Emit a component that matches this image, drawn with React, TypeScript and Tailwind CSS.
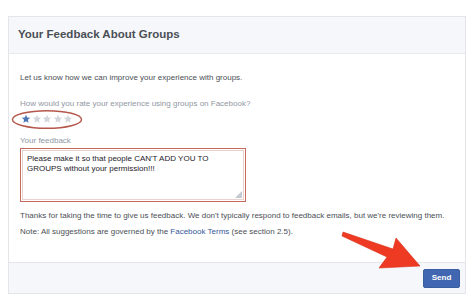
import React from 'react';

const Stars: React.FC<{ rating: number }> = ({ rating }) => (
  <div className="flex items-center gap-[0.5px]">
    {[0, 1, 2, 3, 4].map((i) => (
      <svg key={i} width="10" height="10" viewBox="0 0 24 24">
        <path
          d="M12 2l2.9 6.6 7.1.6-5.4 4.7 1.6 7-6.2-3.7-6.2 3.7 1.6-7L2 9.2l7.1-.6z"
          fill={i < rating ? '#4a76b5' : '#d3d6db'}
        />
      </svg>
    ))}
  </div>
);

const App: React.FC = () => {
  return (
    <div
      className="relative w-[474px] h-[307px] bg-white overflow-hidden text-[#4b4f56]"
      style={{ fontFamily: '"Liberation Sans", Arial, sans-serif' }}
    >
      <div className="pt-[16px] pl-[8px]">
        <div className="w-[458px] border border-[#e3e5e9] bg-white">
          {/* Header */}
          <div className="h-[37px] flex items-center pl-[9px] bg-[#f5f7fa] border-b border-[#e9eaee]">
            <h1 className="text-[11.5px] font-bold text-[#4b4f56]">Your Feedback About Groups</h1>
          </div>

          {/* Body */}
          <div className="pl-[11px] pt-[19px] pb-[25px] text-[8px] leading-[10px]">
            <p>Let us know how we can improve your experience with groups.</p>
            <p className="mt-[16px] text-[#9197a3]">How would you rate your experience using groups on Facebook?</p>
            <div className="mt-[5px] pl-[1px]">
              <Stars rating={1} />
            </div>
            <p className="mt-[12px] text-[#9197a3]">Your feedback</p>
            <div className="mt-[2px] w-[226px] h-[54px] border-[1.5px] border-[#c66a5e] p-[1px] bg-white">
              <div className="relative w-full h-full border border-[#e8d2d0] px-[4px] pt-[3px] text-[#1d2129]">
                <p>Please make it so that people CAN'T ADD YOU TO GROUPS without your permission!!!</p>
                <svg className="absolute right-[1px] bottom-[1px]" width="7" height="7" viewBox="0 0 7 7">
                  <path d="M7 0L7 7L0 7Z" fill="#c5c8ce" />
                </svg>
              </div>
            </div>
            <p className="mt-[9px]">
              Thanks for taking the time to give us feedback. We don't typically respond to feedback emails, but we're reviewing them.
            </p>
            <p className="mt-[6px]">
              Note: All suggestions are governed by the <span className="text-[#365899]">Facebook Terms</span> (see section 2.5).
            </p>
          </div>

          {/* Footer */}
          <div className="h-[31px] flex items-center justify-end pr-[5px] bg-[#f5f7fa] border-t border-[#e5e6ea]">
            <button className="w-[37px] h-[19px] bg-[#4267b2] border border-[#3b5e9f] text-white text-[8px] font-bold rounded-[2px]">
              Send
            </button>
          </div>
        </div>
      </div>

      {/* Annotation: oval around stars */}
      <svg className="absolute left-[11px] top-[109px]" width="74" height="21" viewBox="0 0 74 21">
        <ellipse cx="36" cy="10.5" rx="34.5" ry="8.8" fill="none" stroke="#b5574b" strokeWidth="1.4" />
      </svg>

      {/* Annotation: red arrow */}
      <svg className="absolute left-[338px] top-[228px]" width="90" height="46" viewBox="0 0 90 46">
        <path
          d="M5 4 L55 21 L58 10 L82 38 L41 40 L49 29 L4 8 Z"
          fill="#ee3a22"
          stroke="#d9301b"
          strokeWidth="0.6"
          strokeLinejoin="round"
        />
      </svg>
    </div>
  );
};

export default App;
